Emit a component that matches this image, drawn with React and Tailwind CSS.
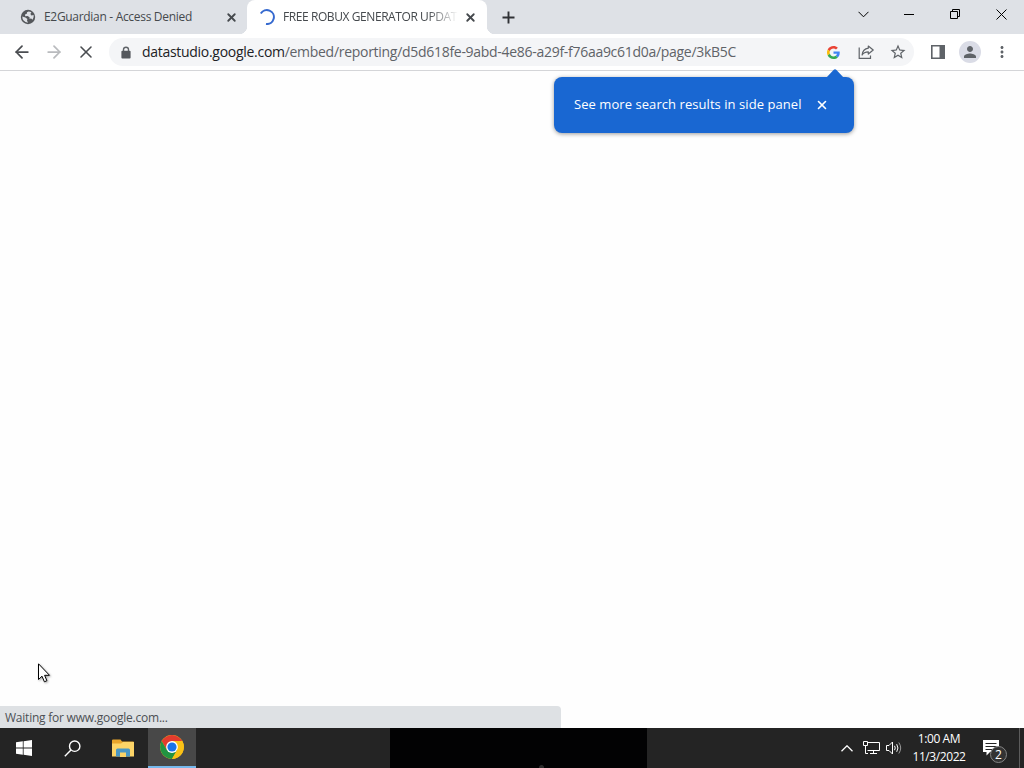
import { ArrowLeft, ArrowRight, X } from 'lucide-react';
import { MdStarBorder, MdPerson, MdMoreVert } from 'react-icons/md';

function GlobeIcon() {
  return (
    <svg viewBox="0 0 16 16" className="w-4 h-4 shrink-0">
      <circle cx="8" cy="8" r="7.2" fill="#54575b" />
      <path fill="#dee1e6" d="M8.6 2.4L7 3.2L6.8 4.8L5 5.4L5.2 7.2L7.6 7L9.6 8.2L9.4 9.8L11.2 9.6L12.6 10.8Q14.2 8.6 13.6 6L11.4 6.6L10.4 5L11.4 3.2Q10 2.4 8.6 2.4Z" />
      <path fill="#dee1e6" d="M2.3 7.6L5.4 8.6L7.4 10L7 11.4L8 13.7Q5.2 13.6 3.6 11.6Q2.2 9.8 2.3 7.6Z" />
    </svg>
  );
}

function LockIcon() {
  return (
    <svg viewBox="0 0 10 13" className="w-[10px] h-[13px] shrink-0">
      <path d="M2.5 6V3.6Q2.5 1.2 5 1.2T7.5 3.6V6" fill="none" stroke="#5f6368" strokeWidth="1.4" />
      <rect x=".4" y="4.8" width="9.2" height="7.6" rx="1" fill="#55585d" />
    </svg>
  );
}

function GoogleIcon() {
  return (
    <svg viewBox="0 0 48 48" className="w-[13px] h-[13px]">
      <path fill="#EA4335" d="M24 9.5c3.54 0 6.71 1.22 9.21 3.6l6.85-6.85C35.9 2.38 30.47 0 24 0 14.62 0 6.51 5.38 2.56 13.22l7.98 6.19C12.43 13.72 17.74 9.5 24 9.5z" />
      <path fill="#4285F4" d="M46.98 24.55c0-1.57-.15-3.09-.38-4.55H24v9.02h12.94c-.58 2.96-2.26 5.48-4.78 7.18l7.73 6c4.51-4.18 7.09-10.36 7.09-17.65z" />
      <path fill="#FBBC05" d="M10.53 28.59c-.48-1.45-.76-2.99-.76-4.59s.27-3.14.76-4.59l-7.98-6.19C.92 16.46 0 20.12 0 24s.92 7.54 2.56 10.78l7.97-6.19z" />
      <path fill="#34A853" d="M24 48c6.48 0 11.93-2.13 15.89-5.81l-7.73-6c-2.15 1.45-4.92 2.3-8.16 2.3-6.26 0-11.57-4.22-13.47-9.91l-7.98 6.19C6.51 42.62 14.62 48 24 48z" />
    </svg>
  );
}

function ShareIcon() {
  return (
    <svg viewBox="0 0 16 16" className="w-4 h-4" fill="none" stroke="#5f6368" strokeWidth="1.2">
      <path d="M1.2 3.5V14.4H12.5V11.5" />
      <path d="M10.3 2L15.2 6L10.3 10V7.8C7.3 7.8 5.3 8.8 4.1 11C4.5 7.4 6.6 4.8 10.3 4.2Z" strokeLinejoin="round" />
    </svg>
  );
}

function ChromeIcon() {
  return (
    <svg viewBox="0 0 24 24" className="w-6 h-6">
      <circle cx="12" cy="12" r="11.9" fill="#fbc116" />
      <path fill="#e33b2e" d="M1.7 6.05A11.9 11.9 0 0 1 22.3 6.05L12 6.05L6.85 15Z" />
      <path fill="#229342" d="M1.7 6.05A11.9 11.9 0 0 0 12 23.9L17.15 15L12 12L6.85 15Z" />
      <path fill="#fbc116" d="M12 23.9A11.9 11.9 0 0 0 22.3 6.05H12L17.15 15Z" />
      <circle cx="12" cy="12" r="5.9" fill="#fff" />
      <circle cx="12" cy="12" r="4.6" fill="#1a73e8" />
    </svg>
  );
}

function FolderIcon() {
  return (
    <svg viewBox="0 0 22 18" className="w-[22px] h-[18px]">
      <path fill="#e8a52c" d="M0 1.5Q0 .5 1 .5H8.5L10 2.5H21Q22 2.5 22 3.5V8H0Z" />
      <path fill="#fcd467" d="M0 4.5H9L11 3H22V17.5H0Z" />
      <path fill="#4a97c4" d="M4 17.5V11Q4 9.5 5.5 9.5H16.5Q18 9.5 18 11V17.5H14V13.5H8V17.5Z" />
      <path fill="#fcd467" d="M8 14H14V18H8Z" />
    </svg>
  );
}

function TabStrip() {
  return (
    <div className="flex h-[34px] bg-[#dee1e6] text-[12px] text-[#45494d]">
      <div className="flex items-center w-[247px] pl-[20px] pr-[9px]">
        <GlobeIcon />
        <span className="ml-2 whitespace-nowrap tracking-[-0.31px]">E2Guardian - Access Denied</span>
        <X className="ml-auto w-[13px] h-[13px]" strokeWidth={3.4} />
      </div>

      {/* Active tab */}
      <div className="relative flex items-center w-[240px] pl-[12px] pr-[10px] bg-white rounded-t-lg">
        <div className="absolute -left-2 bottom-0 w-2 h-2 bg-[radial-gradient(circle_at_0_0,#dee1e6_8px,#fff_8.5px)]" />
        <div className="absolute -right-2 bottom-0 w-2 h-2 bg-[radial-gradient(circle_at_100%_0,#dee1e6_8px,#fff_8.5px)]" />
        <svg viewBox="0 0 16 16" className="w-4 h-4 shrink-0" fill="none" stroke="#3569cf" strokeWidth="2">
          <path d="M1.8 4.6A7 7 0 1 1 7 15" />
        </svg>
        <span className="ml-2 w-[177px] whitespace-nowrap tracking-[-0.42px] [mask-image:linear-gradient(to_right,#000_145px,transparent_175px)]">
          FREE ROBUX GENERATOR UPDAT
        </span>
        <X className="ml-auto w-[13px] h-[13px] shrink-0" strokeWidth={3.4} />
      </div>

      <div className="flex items-center pl-[15px]">
        <svg viewBox="0 0 13 13" className="w-[13px] h-[13px]" stroke="#303236" strokeWidth="1.9">
          <path d="M6.5 .5V12.5M.5 6.5H12.5" />
        </svg>
      </div>

      {/* Window buttons */}
      <div className="ml-auto flex h-[28px] items-center text-black">
        <div className="w-[46px] flex justify-center">
          <svg viewBox="0 0 11 7" className="w-[11px] h-[7px]" fill="none" stroke="currentColor" strokeWidth="1">
            <path d="M.5 .8L5.5 5.8L10.5 .8" />
          </svg>
        </div>
        <div className="w-[46px] flex justify-center">
          <div className="w-[10px] h-px bg-black" />
        </div>
        <div className="w-[46px] flex justify-center">
          <svg viewBox="0 0 10 10" className="w-[10px] h-[10px]" fill="none" stroke="currentColor">
            <path d="M.5 2.5H7.5V9.5H.5ZM2.5 2.5V.5H9.5V7.5H7.5" />
          </svg>
        </div>
        <div className="w-[46px] flex justify-center">
          <svg viewBox="0 0 11 11" className="w-[11px] h-[11px]" stroke="currentColor">
            <path d="M.5 .5L10.5 10.5M10.5 .5L.5 10.5" />
          </svg>
        </div>
      </div>
    </div>
  );
}

function Toolbar() {
  return (
    <div className="flex items-center h-[37px] border-b border-[#d4d5d8] bg-white text-[#5f6368]">
      <div className="flex items-center w-[109px] pl-[12px] gap-[12px]">
        <ArrowLeft className="w-5 h-5 text-[#4a4d51]" strokeWidth={2.1} />
        <ArrowRight className="w-5 h-5 text-[#b9bbbe]" strokeWidth={2.1} />
        <X className="w-5 h-5 text-[#4a4d51]" strokeWidth={1.9} />
      </div>

      {/* Address bar */}
      <div className="flex items-center w-[805px] h-7 rounded-full bg-[#f4f5f7] pl-[12px] pr-[7px]">
        <LockIcon />
        <span className="ml-[11px] text-[14px] leading-5 tracking-[-0.29px] whitespace-nowrap">
          <span className="text-[#202124]">datastudio.google.com</span>/embed/reporting/d5d618fe-9abd-4e86-a29f-f76aa9c61d0a/page/3kB5C
        </span>
        <div className="ml-auto flex items-center gap-[15px]">
          <GoogleIcon />
          <div className="pl-[3px]"><ShareIcon /></div>
          <MdStarBorder className="w-[18px] h-[18px]" />
        </div>
      </div>

      <div className="flex items-center pl-[17px]">
        <svg viewBox="0 0 14 14" className="w-[14px] h-[14px]">
          <path d="M.8 .8H13.2V13.2H.8Z" fill="none" stroke="#5f6368" strokeWidth="1.6" />
          <path d="M8.5 1H13V13H8.5Z" fill="#5f6368" />
        </svg>
        <div className="ml-[14px] w-[22px] h-[22px] rounded-full bg-[#dadce6] flex items-center justify-center">
          <MdPerson className="w-[18px] h-[18px]" />
        </div>
        <MdMoreVert className="ml-[12px] w-[18px] h-[18px]" />
      </div>
    </div>
  );
}

function Taskbar() {
  return (
    <div className="flex h-10 bg-[#242424] text-white">
      <div className="w-12 flex items-center justify-center">
        <svg viewBox="0 0 16 16" className="w-4 h-4" fill="#fff">
          <path d="M0 2.3L6.8 1.3V7.5H0ZM7.6 1.2L16 0V7.5H7.6ZM0 8.4H6.8V14.7L0 13.7ZM7.6 8.4H16V16L7.6 14.8Z" />
        </svg>
      </div>
      <div className="w-12 flex items-center justify-center">
        <svg viewBox="0 0 17 17" className="w-[17px] h-[17px]" fill="none" stroke="#fff" strokeWidth="1.4">
          <circle cx="10.7" cy="6.2" r="5.2" />
          <path d="M7 10L.8 16.2" />
        </svg>
      </div>
      <div className="w-[52px] pl-[2px] flex items-center justify-center">
        <FolderIcon />
      </div>
      <div className="w-12 flex items-center justify-center bg-[#484848] border-b-2 border-[#76b9ed]">
        <ChromeIcon />
      </div>

      {/* Dark stretch in the middle of the bar */}
      <div className="ml-[194px] w-[257px] bg-[#020203] flex items-end">
        <div className="ml-[149px] w-[5px] h-[3px] bg-[#2c2c2c] rounded-t-full" />
      </div>

      {/* Tray */}
      <div className="ml-auto flex items-center">
        <svg viewBox="0 0 12 7" className="w-[12px] h-[7px]" fill="none" stroke="#fff" strokeWidth="1.3">
          <path d="M.5 6.3L6 .8L11.5 6.3" />
        </svg>
        <svg viewBox="0 0 17 14" className="ml-[10px] w-[17px] h-[14px]" fill="none" stroke="#fff" strokeWidth="1">
          <path d="M5 1.5H16.5V9.5H4.5M10.5 9.5V12.5M7 12.5H14" />
          <path d="M.5 .5H4.5V4.5H.5ZM2.5 4.5V12.5H5" />
        </svg>
        <svg viewBox="0 0 16 14" className="ml-[6px] w-[16px] h-[14px]" fill="none" stroke="#fff" strokeWidth="1">
          <path d="M.5 4.5H3L6.5 1V13L3 9.5H.5Z" />
          <path d="M8.5 4.8Q10 7 8.5 9.2M10.7 3.2Q13.2 7 10.7 10.8" />
          <path d="M12.8 1.5Q16.6 7 12.8 12.5" stroke="#999" />
        </svg>
        <div className="w-[74px] text-center text-[12px] leading-[18px] whitespace-nowrap tracking-[-0.42px]">
          <div>1:00 AM</div>
          <div>11/3/2022</div>
        </div>
        <div className="relative ml-[7px] w-[24px] h-[24px]">
          <svg viewBox="0 0 17 17" className="w-[17px] h-[17px] mt-[4px]">
            <path d="M0 0H16V12H7L3.5 15.5V12H0Z" fill="#fff" />
            <path d="M2.5 3.5H13.5M2.5 6.5H13.5M2.5 9.5H9.5" stroke="#242424" />
          </svg>
          <div className="absolute left-[7px] top-[10px] w-[17px] h-[17px] rounded-full bg-[#333] border border-[#858585] text-[12px] leading-[15px] text-center">
            2
          </div>
        </div>
        <div className="ml-[12px] mr-[4px] w-px h-10 bg-[#5c5c5c]" />
      </div>
    </div>
  );
}

export default function App() {
  return (
    <div className="relative flex flex-col w-[1024px] h-[768px] overflow-hidden bg-white font-['Open_Sans','Noto_Sans',sans-serif]">
      <TabStrip />
      <Toolbar />

      <main className="flex-1 flex items-end bg-[#fefefe]">
        {/* Status bubble */}
        <div className="w-[561px] h-[22px] rounded-tr-[4px] bg-[#dee1e4] pl-[5px] text-[12px] leading-[23px] tracking-[-0.23px] text-[#4c5054]">
          Waiting for www.google.com...
        </div>
      </main>

      <Taskbar />

      {/* Side panel promo */}
      <div className="absolute left-[554px] top-[77px] w-[300px] h-[56px] rounded-lg bg-[#1967d2] shadow-[0_1px_4px_rgba(0,0,0,0.4)] flex items-center pl-[20px] text-white">
        <svg viewBox="0 0 18 9" className="absolute left-[272px] top-[-8px] w-[18px] h-[9px]">
          <path d="M0 9L7.5 1Q9 -.4 10.5 1L18 9Z" fill="#1967d2" />
        </svg>
        <span className="text-[13px] whitespace-nowrap tracking-[0.06px]">See more search results in side panel</span>
        <X className="absolute left-[261px] top-[21px] w-[14px] h-[14px]" strokeWidth={2.8} />
      </div>

      {/* Mouse cursor */}
      <svg viewBox="0 0 13 20" className="absolute left-[38px] top-[663px] w-[13px] h-[20px] drop-shadow-[1px_1px_1px_rgba(0,0,0,0.35)]">
        <path d="M.5 .8V16.5L4 13.2L6.4 18.8L8.9 17.7L6.6 12.3H11.5Z" fill="#fff" stroke="#000" />
      </svg>
    </div>
  );
}
